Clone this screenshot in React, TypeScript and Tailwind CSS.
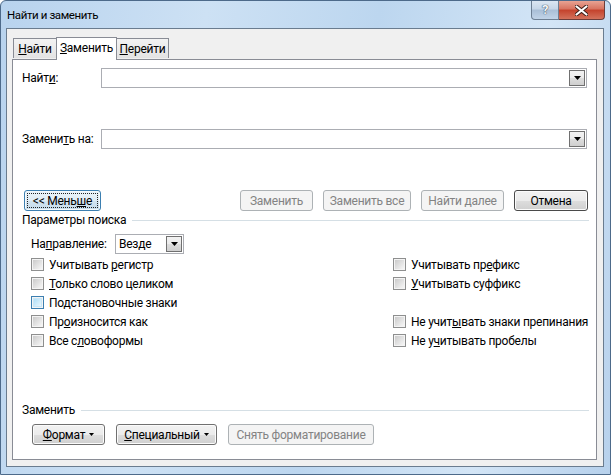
import React from 'react'

const face = "font-['Roboto',sans-serif] text-[12px] leading-[16px] tracking-[-0.25px]"

function Combo() {
  return (
    <div className="h-[20px] flex-1 border border-[#abadb3] bg-white flex justify-end items-center pr-[1px]">
      <DropBtn />
    </div>
  )
}

function DropBtn() {
  return (
    <div className="w-[16px] h-[16px] border border-[#707070] bg-[linear-gradient(#f2f2f2_0%,#ebebeb_50%,#dddddd_51%,#cfcfcf_100%)] flex items-center justify-center">
      <svg width="7" height="4" viewBox="0 0 7 4">
        <path d="M0 0h7L3.5 4z" fill="#000" />
      </svg>
    </div>
  )
}

function Btn({
  children,
  w,
  disabled,
  focused,
  isDefault
}: {
  children: React.ReactNode
  w: string
  disabled?: boolean
  focused?: boolean
  isDefault?: boolean
}) {
  let look =
    'border-[#707070] bg-[linear-gradient(#f2f2f2_0%,#ebebeb_50%,#dddddd_51%,#cfcfcf_100%)] text-black shadow-[inset_0_0_0_1px_#fbfbfb]'
  if (disabled) look = 'border-[#adb2b5] bg-[#f4f4f4] text-[#838383]'
  if (focused)
    look =
      'border-[#3c7fb1] bg-[linear-gradient(#eaf3f9_0%,#e0ecf5_50%,#d2e4f1_51%,#c6dbeb_100%)] text-black shadow-[inset_0_0_0_1px_#f4f9fc]'
  if (isDefault)
    look =
      'border-[#4a4a4a] bg-[linear-gradient(#f2f2f2_0%,#ebebeb_50%,#dddddd_51%,#cfcfcf_100%)] text-black shadow-[inset_0_0_0_1px_#fbfbfb]'
  return (
    <div className={`${w} h-[21px] rounded-[3px] border flex items-center justify-center p-[2px] ${look}`}>
      {focused ? (
        <span className="w-full h-full border border-dotted border-[#222] flex items-center justify-center">{children}</span>
      ) : (
        children
      )}
    </div>
  )
}

function Check({ children, hover }: { children: React.ReactNode; hover?: boolean }) {
  return (
    <div className="h-[19px] flex items-center gap-[5px] whitespace-nowrap">
      <div
        className={`w-[13px] h-[13px] shrink-0 border p-[1px] bg-[#f4f4f4] ${hover ? 'border-[#3c7fb1]' : 'border-[#8e8f8f]'}`}
      >
        <div
          className={`w-full h-full ${
            hover
              ? 'bg-[linear-gradient(135deg,#b1dff7,#e8f6fd)] border border-[#c8e6f7]'
              : 'bg-[linear-gradient(135deg,#cbcbcb,#f6f6f6)]'
          }`}
        />
      </div>
      <span>{children}</span>
    </div>
  )
}

function Group({ title }: { title: string }) {
  return (
    <div className="flex items-center gap-[6px] pr-[7px]">
      <span>{title}</span>
      <div className="flex-1 h-px bg-[#d5dfe5]" />
    </div>
  )
}

export default function App() {
  return (
    <div
      className={`${face} relative w-[611px] h-[475px] overflow-hidden flex flex-col text-black bg-[linear-gradient(100deg,#b8d3ee_0%,#cde1f4_30%,#bcd6ef_55%,#d3e5f6_80%,#b7d1ec_100%)] rounded-t-[6px] border border-[#4d6a8a]`}
    >
      {/* title bar */}
      <div className="h-[27px] flex items-start justify-between shrink-0">
        <div className="pl-[6px] pt-[6px] text-[11.5px] tracking-[-0.4px] text-black">Найти и заменить</div>
        <div className="flex mr-[5px]">
          <div className="w-[28px] h-[19px] rounded-bl-[4px] border border-t-0 border-[#6d7f93] bg-[linear-gradient(#dbe6f2_0%,#c6d6e8_45%,#a9bed6_50%,#c1d4e8_100%)] flex items-center justify-center">
            <span className="text-[13px] font-bold text-[#f4f7fa] [text-shadow:0_0_1px_#2c3e55,0_0_1px_#2c3e55]">?</span>
          </div>
          <div className="w-[46px] h-[19px] rounded-br-[4px] border border-l-0 border-t-0 border-[#6d3d3a] bg-[linear-gradient(#e8a393_0%,#d7725f_45%,#c4422c_50%,#d3725c_100%)] flex items-center justify-center">
            <svg width="13" height="11" viewBox="0 0 13 11">
              <path d="M1.5 1.5l10 8M11.5 1.5l-10 8" stroke="#3b1d17" strokeWidth="4" strokeLinecap="round" />
              <path d="M1.5 1.5l10 8M11.5 1.5l-10 8" stroke="#fff" strokeWidth="2.2" strokeLinecap="round" />
            </svg>
          </div>
        </div>
      </div>

      {/* client area */}
      <div className="flex-1 ml-[5px] mr-[6px] mb-[7px] border border-[#6a7c8f] bg-[#f0f0f0] flex flex-col pt-[8px] pl-[5px] pr-[6px] pb-[6px]">
        {/* tabs */}
        <div className="flex items-end h-[22px] pl-[1px] relative z-10">
          <div className="w-[44px] h-[20px] border border-b-0 border-[#898c95] bg-[linear-gradient(#f3f3f3,#e3e3e3)] flex items-center justify-center mb-px">
            <span><u>Н</u>айти</span>
          </div>
          <div className="w-[61px] h-[23px] -ml-px border border-b-0 border-[#898c95] bg-white flex items-center justify-center -mb-px pb-[2px]">
            <span><u>З</u>аменить</span>
          </div>
          <div className="w-[53px] h-[20px] -ml-px border border-b-0 border-[#898c95] bg-[linear-gradient(#f3f3f3,#e3e3e3)] flex items-center justify-center mb-px">
            <span><u>П</u>ерейти</span>
          </div>
        </div>

        {/* panel */}
        <div className="flex-1 border border-[#898c95] bg-white flex flex-col pl-[9px] pt-[8px]">
          <div className="flex items-center pr-[9px]">
            <span className="w-[79px]">Найт<u>и</u>:</span>
            <Combo />
          </div>
          <div className="flex items-center pr-[9px] mt-[41px]">
            <span className="w-[79px]">Замени<u>т</u>ь на:</span>
            <Combo />
          </div>

          <div className="flex items-center mt-[41px] pr-[8px]">
            <div className="ml-[2px]">
              <Btn w="w-[77px]" focused>
                &lt;&lt; Мень<u>ш</u>е
              </Btn>
            </div>
            <div className="ml-auto flex gap-[10px]">
              <Btn w="w-[73px]" disabled>Заменить</Btn>
              <Btn w="w-[88px]" disabled>Заменить все</Btn>
              <Btn w="w-[83px]" disabled>Найти далее</Btn>
              <Btn w="w-[74px]" isDefault>Отмена</Btn>
            </div>
          </div>

          <div className="mt-[1px]">
            <Group title="Параметры поиска" />
          </div>

          <div className="pl-[9px] mt-[6px] flex items-center">
            <span className="w-[84px]">На<u>п</u>равление:</span>
            <div className="w-[69px] h-[20px] border border-[#abadb3] flex items-center justify-between pl-[3px] pr-[1px]">
              <span>Везде</span>
              <DropBtn />
            </div>
          </div>

          <div className="pl-[9px] mt-[1px] flex">
            <div className="flex flex-col w-[362px] shrink-0">
              <Check><span>Учитывать <u>р</u>егистр</span></Check>
              <Check><span><u>Т</u>олько слово целиком</span></Check>
              <Check hover><span>Подстановочные знаки</span></Check>
              <Check><span>Пр<u>о</u>износится как</span></Check>
              <Check><span>Все с<u>л</u>овоформы</span></Check>
            </div>
            <div className="flex flex-col">
              <Check><span>Учитывать пр<u>е</u>фикс</span></Check>
              <Check><span><u>У</u>читывать суффикс</span></Check>
              <div className="h-[19px]" />
              <Check><span>Не учит<u>ы</u>вать знаки препинания</span></Check>
              <Check><span>Не у<u>ч</u>итывать пробелы</span></Check>
            </div>
          </div>

          <div className="mt-auto">
            <Group title="Заменить" />
          </div>
          <div className="flex gap-[11px] pl-[10px] mt-[6px] mb-[14px]">
            <Btn w="w-[73px]">
              <span className="flex items-center gap-[4px]">
                <span><u>Ф</u>ормат</span>
                <svg width="5" height="3" viewBox="0 0 5 3"><path d="M0 0h5L2.5 3z" fill="#000" /></svg>
              </span>
            </Btn>
            <Btn w="w-[101px]">
              <span className="flex items-center gap-[4px]">
                <span><u>С</u>пециальный</span>
                <svg width="5" height="3" viewBox="0 0 5 3"><path d="M0 0h5L2.5 3z" fill="#000" /></svg>
              </span>
            </Btn>
            <Btn w="w-[146px]" disabled>Снять форматирование</Btn>
          </div>
        </div>
      </div>
    </div>
  )
}
